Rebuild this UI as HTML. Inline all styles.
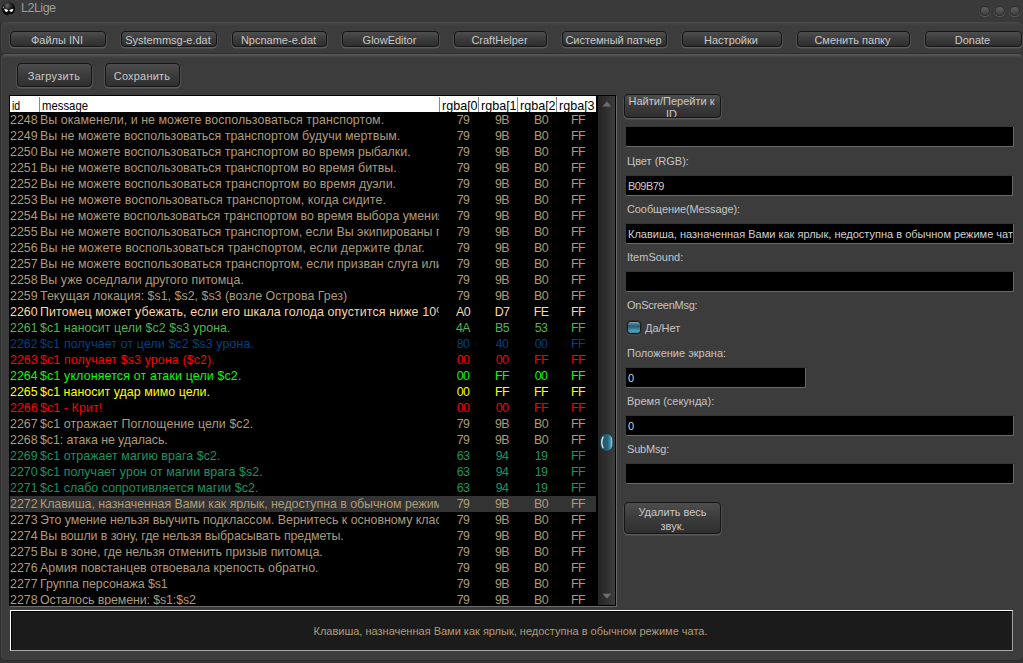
<!DOCTYPE html>
<html><head><meta charset="utf-8"><title>L2Lige</title>
<style>
*{box-sizing:border-box;margin:0;padding:0}
html,body{width:1023px;height:663px;overflow:hidden;background:#323232;font-family:"Liberation Sans",sans-serif;}
body{position:relative;color:#c8c8c8;font-size:11px}
.abs{position:absolute}
#title{position:absolute;left:21px;top:0px;font-size:12.5px;letter-spacing:-0.5px;color:#9c9c9c;line-height:16px}
#tb{position:absolute;left:1px;top:22px;width:1022px;height:31px;background:linear-gradient(#4c4c4c 0,#424242 2px,#3d3d3d 4px,#3c3c3c 100%);border-radius:6px 6px 6px 6px;box-shadow:inset 1px 0 0 #444,0 1px 0 #2e2e2e}
#main{position:absolute;left:1px;top:54px;width:1022px;height:606px;background:linear-gradient(#5a5a5a 0,#555 1px,#464646 2.5px,#3c3c3c 4.5px);border-radius:5px;box-shadow:inset 1px 0 0 #464646,0 1px 0 #2c2c2c}
#tbar{position:absolute;left:0;top:0;width:1023px;height:54px;background:#3a3a3a}
#ledge{position:absolute;left:0;top:22px;width:1px;height:641px;background:#2f2f2f}
.btn{position:absolute;height:16px;top:31px;border:1px solid #161616;border-radius:4px;background:linear-gradient(#4e4e4e,#3d3d3d 45%,#2f2f2f);color:#c9c9c9;font-size:11px;line-height:15px;padding:1px 2px 0 0;text-align:center;box-shadow:0 1px 0 0.6px #5a5a5a;white-space:nowrap;overflow:hidden}
.btn2{height:24px;line-height:22px}
.circ{position:absolute;top:5.5px;width:11px;height:11px;border-radius:50%;background:radial-gradient(circle at 50% 35%,#606060,#444 60%,#3a3a3a);border:1px solid #2b2b2b;box-shadow:0 0 0 0.5px #444,0 1px 0 0.6px #5c5c5c}
#tbl{position:absolute;left:9px;top:95px;width:607px;height:511px;background:#000;border:1px solid #000;box-shadow:1px 1px 0 #6a6a6a}
#tbl>div{overflow:hidden}
#hdr{position:absolute;left:0;top:0;width:586px;height:16px;background:#fff;color:#000;font-size:13.5px;line-height:16px}
#hdr b{display:inline-block;font-weight:normal;transform-origin:0 0;white-space:nowrap}
#hdr span{position:absolute;top:1px;height:15px;border-left:1px solid #888;padding-left:2px;overflow:hidden;white-space:nowrap;line-height:17px}
#rows{position:absolute;left:0;top:16px;width:586px;height:493px;overflow:hidden}
.r{position:relative;height:16px;width:586px;font-size:12.4px;line-height:16px;white-space:nowrap;overflow:hidden}
.r span{position:absolute;top:0;height:16px;overflow:hidden}
.i{left:0;width:30px;padding-left:0}
.m{left:30px;width:399px}
.a,.b,.c,.e{width:39px;text-align:center;letter-spacing:-0.6px}
.a{left:430px;width:46px}.b{left:469px;width:46px}.c{left:508px;width:46px}.e{left:545px;width:46px}
.d{color:#b09b79}.c1{color:#fed7a0}.c2{color:#53b54a}.c3{color:#004080}.c4{color:#ff0000}.c5{color:#00ff00}.c6{color:#ffff00}.c7{color:#199463}
.sel{background:#333}
#sb{position:absolute;left:588px;top:0;width:17px;height:509px;background:linear-gradient(90deg,#252525,#2e2e2e 45%,#3e3e3e)}
.lbl{position:absolute;left:627px;font-size:11px;color:#c4c4c4;line-height:14px;white-space:nowrap}
.inp{position:absolute;left:626px;width:388px;height:20px;background:#000;border-bottom:1px solid #686868;border-right:1px solid #686868;box-shadow:0 -1px 0 #373737;color:#d0d0d0;font-size:11px;line-height:19px;padding-left:2px;padding-top:1px;white-space:nowrap;overflow:hidden}
#status{position:absolute;left:10px;top:610px;width:1003px;height:41px;background:#1b1b1b;border:1px solid;border-color:#fff #a0a0a0 #aaa #fff;box-shadow:inset 1px 1px 0 #000;color:#b09b79;font-size:11px;line-height:41px;text-align:center;padding-right:2px}
</style></head><body>
<div id="tbar"></div><div id="ledge"></div>
<svg class="abs" style="left:1px;top:0" width="16" height="17" viewBox="0 0 16 17"><defs><radialGradient id="g1" cx="42%" cy="28%" r="60%"><stop offset="0" stop-color="#666"/><stop offset="0.45" stop-color="#2a2a2a"/><stop offset="0.8" stop-color="#0a0a0a"/><stop offset="1" stop-color="#000"/></radialGradient></defs><circle cx="7.4" cy="8.5" r="6.7" fill="url(#g1)"/><path d="M3.3 8.7 Q5.2 8.9 7.3 10.3 Q6.7 12 5.2 12 Q3.5 11.6 3.3 8.7Z" fill="#fff"/><path d="M12.3 8.7 Q10.4 8.9 8.3 10.3 Q8.9 12 10.4 12 Q12.1 11.6 12.3 8.7Z" fill="#fff"/><circle cx="2.3" cy="7.3" r="0.6" fill="#aaa"/><path d="M7.6 14.6 Q8.8 14.8 9.8 14.2" stroke="#777" stroke-width="0.7" fill="none"/><path d="M6.8 2 L7.6 0.6" stroke="#333" stroke-width="0.8" fill="none"/></svg>
<div id="title">L2Lige</div>
<svg class="abs" style="left:975px;top:2px" width="48" height="18" viewBox="0 0 48 18"><defs><linearGradient id="g3" x1="0" x2="0" y1="0" y2="1"><stop offset="0" stop-color="#626262"/><stop offset="1" stop-color="#3b3b3b"/></linearGradient><linearGradient id="g4" x1="0" x2="0" y1="0" y2="1"><stop offset="0" stop-color="#383838"/><stop offset="0.5" stop-color="#454545"/><stop offset="1" stop-color="#646464"/></linearGradient></defs>
<g><circle cx="9.9" cy="9.1" r="5.9" fill="url(#g4)"/><circle cx="9.9" cy="9.1" r="5.1" fill="#2c2c2c"/><circle cx="9.9" cy="9.1" r="4.1" fill="url(#g3)"/></g><g transform="translate(14.85 0)"><circle cx="9.9" cy="9.1" r="5.9" fill="url(#g4)"/><circle cx="9.9" cy="9.1" r="5.1" fill="#2c2c2c"/><circle cx="9.9" cy="9.1" r="4.1" fill="url(#g3)"/></g><g transform="translate(29.85 0)"><circle cx="9.9" cy="9.1" r="5.9" fill="url(#g4)"/><circle cx="9.9" cy="9.1" r="5.1" fill="#2c2c2c"/><circle cx="9.9" cy="9.1" r="4.1" fill="url(#g3)"/></g></svg>
<div id="tb"></div>
<div id="main"></div>
<div class="btn" style="left:10px;width:96px">Файлы INI</div>
<div class="btn" style="left:121px;width:96px">Systemmsg-e.dat</div>
<div class="btn" style="left:232px;width:95px">Npcname-e.dat</div>
<div class="btn" style="left:342px;width:97px">GlowEditor</div>
<div class="btn" style="left:454px;width:93px">CraftHelper</div>
<div class="btn" style="left:562px;width:105px">Системный патчер</div>
<div class="btn" style="left:682px;width:100px">Настройки</div>
<div class="btn" style="left:797px;width:113px">Сменить папку</div>
<div class="btn" style="left:925px;width:97px">Donate</div>
<div class="btn btn2" style="left:17px;top:63px;width:75px;letter-spacing:0.25px;padding-right:1px">Загрузить</div>
<div class="btn btn2" style="left:105px;top:63px;width:75px;letter-spacing:0.2px;padding-right:1px">Сохранить</div>
<div id="tbl">
<div id="hdr"><span style="left:0;width:29px;border-left:0"><b style="transform:scaleX(.78)">id</b></span><span style="left:29px;width:400px"><b style="transform:scaleX(.84)">message</b></span><span style="left:429px;width:39px"><b style="transform:scaleX(.93)">rgba[0</b></span><span style="left:468px;width:39px"><b style="transform:scaleX(.93)">rgba[1</b></span><span style="left:507px;width:39px"><b style="transform:scaleX(.93)">rgba[2</b></span><span style="left:546px;width:40px"><b style="transform:scaleX(.93)">rgba[3</b></span></div>
<div id="rows">
<div class="r d"><span class="i">2248</span><span class="m" style="letter-spacing:0.060px">Вы окаменели, и не можете воспользоваться транспортом.</span><span class="a">79</span><span class="b">9B</span><span class="c">B0</span><span class="e">FF</span></div>
<div class="r d"><span class="i">2249</span><span class="m" style="letter-spacing:0.018px">Вы не можете воспользоваться транспортом будучи мертвым.</span><span class="a">79</span><span class="b">9B</span><span class="c">B0</span><span class="e">FF</span></div>
<div class="r d"><span class="i">2250</span><span class="m" style="letter-spacing:0.018px">Вы не можете воспользоваться транспортом во время рыбалки.</span><span class="a">79</span><span class="b">9B</span><span class="c">B0</span><span class="e">FF</span></div>
<div class="r d"><span class="i">2251</span><span class="m" style="letter-spacing:0.018px">Вы не можете воспользоваться транспортом во время битвы.</span><span class="a">79</span><span class="b">9B</span><span class="c">B0</span><span class="e">FF</span></div>
<div class="r d"><span class="i">2252</span><span class="m" style="letter-spacing:0.036px">Вы не можете воспользоваться транспортом во время дуэли.</span><span class="a">79</span><span class="b">9B</span><span class="c">B0</span><span class="e">FF</span></div>
<div class="r d"><span class="i">2253</span><span class="m" style="letter-spacing:0.074px">Вы не можете воспользоваться транспортом, когда сидите.</span><span class="a">79</span><span class="b">9B</span><span class="c">B0</span><span class="e">FF</span></div>
<div class="r d"><span class="i">2254</span><span class="m" style="letter-spacing:-0.020px">Вы не можете воспользоваться транспортом во время выбора умения.</span><span class="a">79</span><span class="b">9B</span><span class="c">B0</span><span class="e">FF</span></div>
<div class="r d"><span class="i">2255</span><span class="m" style="letter-spacing:0.020px">Вы не можете воспользоваться транспортом, если Вы экипированы проклятым оружием.</span><span class="a">79</span><span class="b">9B</span><span class="c">B0</span><span class="e">FF</span></div>
<div class="r d"><span class="i">2256</span><span class="m" style="letter-spacing:0.115px">Вы не можете воспользоваться транспортом, если держите флаг.</span><span class="a">79</span><span class="b">9B</span><span class="c">B0</span><span class="e">FF</span></div>
<div class="r d"><span class="i">2257</span><span class="m" style="letter-spacing:0.035px">Вы не можете воспользоваться транспортом, если призван слуга или питомец.</span><span class="a">79</span><span class="b">9B</span><span class="c">B0</span><span class="e">FF</span></div>
<div class="r d"><span class="i">2258</span><span class="m" style="letter-spacing:0.058px">Вы уже оседлали другого питомца.</span><span class="a">79</span><span class="b">9B</span><span class="c">B0</span><span class="e">FF</span></div>
<div class="r d"><span class="i">2259</span><span class="m" style="letter-spacing:0.020px">Текущая локация: $s1, $s2, $s3 (возле Острова Грез)</span><span class="a">79</span><span class="b">9B</span><span class="c">B0</span><span class="e">FF</span></div>
<div class="r c1"><span class="i">2260</span><span class="m" style="letter-spacing:0.125px">Питомец может убежать, если его шкала голода опустится ниже 10%.</span><span class="a">A0</span><span class="b">D7</span><span class="c">FE</span><span class="e">FF</span></div>
<div class="r c2"><span class="i">2261</span><span class="m" style="letter-spacing:0.083px">$c1 наносит цели $c2 $s3 урона.</span><span class="a">4A</span><span class="b">B5</span><span class="c">53</span><span class="e">FF</span></div>
<div class="r c3"><span class="i">2262</span><span class="m" style="letter-spacing:0.124px">$c1 получает от цели $c2 $s3 урона.</span><span class="a">80</span><span class="b">40</span><span class="c">00</span><span class="e">FF</span></div>
<div class="r c4"><span class="i">2263</span><span class="m" style="letter-spacing:0.125px">$c1 получает $s3 урона ($c2).</span><span class="a">00</span><span class="b">00</span><span class="c">FF</span><span class="e">FF</span></div>
<div class="r c5"><span class="i">2264</span><span class="m" style="letter-spacing:0.156px">$c1 уклоняется от атаки цели $c2.</span><span class="a">00</span><span class="b">FF</span><span class="c">00</span><span class="e">FF</span></div>
<div class="r c6"><span class="i">2265</span><span class="m" style="letter-spacing:0.046px">$c1 наносит удар мимо цели.</span><span class="a">00</span><span class="b">FF</span><span class="c">FF</span><span class="e">FF</span></div>
<div class="r c4"><span class="i">2266</span><span class="m" style="letter-spacing:0.100px">$c1 - Крит!</span><span class="a">00</span><span class="b">00</span><span class="c">FF</span><span class="e">FF</span></div>
<div class="r d"><span class="i">2267</span><span class="m" style="letter-spacing:0.094px">$c1 отражает Поглощение цели $c2.</span><span class="a">79</span><span class="b">9B</span><span class="c">B0</span><span class="e">FF</span></div>
<div class="r d"><span class="i">2268</span><span class="m" style="letter-spacing:-0.071px">$c1: атака не удалась.</span><span class="a">79</span><span class="b">9B</span><span class="c">B0</span><span class="e">FF</span></div>
<div class="r c7"><span class="i">2269</span><span class="m" style="letter-spacing:0.079px">$c1 отражает магию врага $c2.</span><span class="a">63</span><span class="b">94</span><span class="c">19</span><span class="e">FF</span></div>
<div class="r c7"><span class="i">2270</span><span class="m" style="letter-spacing:0.056px">$c1 получает урон от магии врага $s2.</span><span class="a">63</span><span class="b">94</span><span class="c">19</span><span class="e">FF</span></div>
<div class="r c7"><span class="i">2271</span><span class="m" style="letter-spacing:0.059px">$c1 слабо сопротивляется магии $c2.</span><span class="a">63</span><span class="b">94</span><span class="c">19</span><span class="e">FF</span></div>
<div class="r d sel"><span class="i">2272</span><span class="m" style="letter-spacing:-0.040px">Клавиша, назначенная Вами как ярлык, недоступна в обычном режиме чата.</span><span class="a">79</span><span class="b">9B</span><span class="c">B0</span><span class="e">FF</span></div>
<div class="r d"><span class="i">2273</span><span class="m" style="letter-spacing:-0.028px">Это умение нельзя выучить подклассом. Вернитесь к основному классу.</span><span class="a">79</span><span class="b">9B</span><span class="c">B0</span><span class="e">FF</span></div>
<div class="r d"><span class="i">2274</span><span class="m" style="letter-spacing:-0.079px">Вы вошли в зону, где нельзя выбрасывать предметы.</span><span class="a">79</span><span class="b">9B</span><span class="c">B0</span><span class="e">FF</span></div>
<div class="r d"><span class="i">2275</span><span class="m" style="letter-spacing:0.011px">Вы в зоне, где нельзя отменить призыв питомца.</span><span class="a">79</span><span class="b">9B</span><span class="c">B0</span><span class="e">FF</span></div>
<div class="r d"><span class="i">2276</span><span class="m">Армия повстанцев отвоевала крепость обратно.</span><span class="a">79</span><span class="b">9B</span><span class="c">B0</span><span class="e">FF</span></div>
<div class="r d"><span class="i">2277</span><span class="m" style="letter-spacing:-0.053px">Группа персонажа $s1</span><span class="a">79</span><span class="b">9B</span><span class="c">B0</span><span class="e">FF</span></div>
<div class="r d"><span class="i">2278</span><span class="m" style="letter-spacing:-0.104px">Осталось времени: $s1:$s2</span><span class="a">79</span><span class="b">9B</span><span class="c">B0</span><span class="e">FF</span></div></div>
<div id="sb">
<svg class="abs" style="left:4px;top:5px" width="10" height="6" viewBox="0 0 10 6"><path d="M0.5 5.4 L4.9 0.6 L9.3 5.4Z" fill="#6f6f6f"/></svg>
<svg class="abs" style="left:4px;top:497px" width="10" height="6" viewBox="0 0 10 6"><path d="M0.5 0.8 L4.9 5.6 L9.3 0.8Z" fill="#6f6f6f"/></svg>
<svg class="abs" style="left:1px;top:337px" width="15" height="19" viewBox="0 0 15 19"><defs><linearGradient id="g2" x1="0" x2="1" y1="0" y2="0"><stop offset="0" stop-color="#1b3a46"/><stop offset="0.12" stop-color="#245a6e"/><stop offset="0.55" stop-color="#265e74"/><stop offset="0.75" stop-color="#3a86a0"/><stop offset="0.9" stop-color="#6ac6d8"/><stop offset="1" stop-color="#2d6170"/></linearGradient></defs><rect x="0.6" y="0.5" width="13.8" height="17.8" rx="6.9" ry="7.6" fill="#2a2a2a"/><rect x="1.1" y="1" width="12.8" height="16.8" rx="6.4" ry="7.2" fill="url(#g2)"/><path d="M4 4.2 Q1.4 9.4 4 14.6" stroke="#dfe9ee" stroke-width="1.3" fill="none" stroke-linecap="round"/></svg>
</div>
</div>
<div class="btn btn2" style="left:624px;top:94px;width:97px;height:24px;line-height:13px;white-space:normal;padding:0 2px 0 0">Найти/Перейти к ID</div>
<div class="inp" style="top:127px"></div>
<div class="lbl" style="top:154px">Цвет (RGB):</div>
<div class="inp" style="top:176px;width:387px;letter-spacing:-0.55px">B09B79</div>
<div class="lbl" style="top:202px;letter-spacing:-0.1px">Сообщение(Message):</div>
<div class="inp" style="top:224px">Клавиша, назначенная Вами как ярлык, недоступна в обычном режиме чата.</div>
<div class="lbl" style="top:250px">ItemSound:</div>
<div class="inp" style="top:272px"></div>
<div class="lbl" style="top:298px;letter-spacing:-0.25px">OnScreenMsg:</div>
<div class="abs" style="left:627px;top:321px;width:14px;height:13px;border-radius:3.5px;border:1px solid #161a1c;background:linear-gradient(#8ea4ad 0,#3f7387 22%,#2a5d72 42%,#4ea4bb 82%,#3a7f95 100%);box-shadow:0 0 0 0.5px #222,0 1px 0 0.5px #555"></div>
<div class="lbl" style="left:645px;top:321px">Да/Нет</div>
<div class="lbl" style="top:346px">Положение экрана:</div>
<div class="inp" style="top:368px;width:180px">0</div>
<div class="lbl" style="top:394px">Время (секунда):</div>
<div class="inp" style="top:416px">0</div>
<div class="lbl" style="top:442px;letter-spacing:-0.2px">SubMsg:</div>
<div class="inp" style="top:464px"></div>
<div class="btn btn2" style="left:624px;top:502px;width:97px;height:32px;line-height:14px;white-space:normal;padding:2px 8px 0">Удалить весь звук.</div>
<div id="status">Клавиша, назначенная Вами как ярлык, недоступна в обычном режиме чата.</div>
</body></html>
